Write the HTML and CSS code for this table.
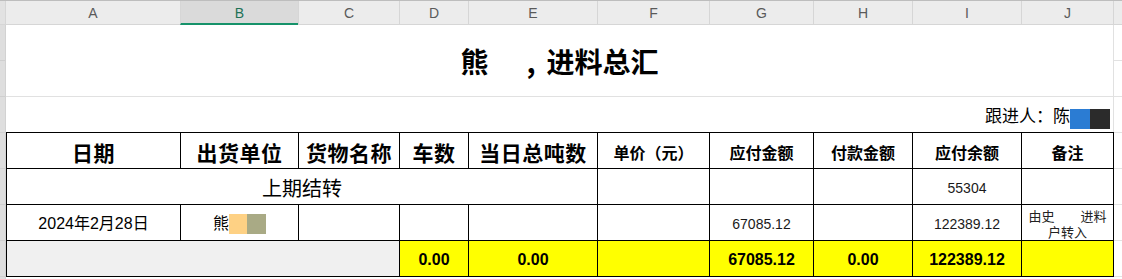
FILE: index.html
```html
<!DOCTYPE html>
<html lang="zh-CN">
<head>
<meta charset="utf-8">
<title>进料总汇</title>
<link rel="stylesheet" href="styles.css">
</head>
<body>
<div class="colhead">
  <div class="corner"></div>
  <div class="ch">A</div>
  <div class="ch sel">B</div>
  <div class="ch">C</div>
  <div class="ch">D</div>
  <div class="ch">E</div>
  <div class="ch">F</div>
  <div class="ch">G</div>
  <div class="ch">H</div>
  <div class="ch">I</div>
  <div class="ch">J</div>
  <div class="ch"></div>
</div>
<div class="body">
  <div class="rowhead">
    <div class="rh r35"></div>
    <div class="rh r36"></div>
    <div class="rh r36"></div>
    <div class="rh r36"></div>
    <div class="rh r36"></div>
    <div class="rh r36"></div>
    <div class="rh r36"></div>
  </div>
  <div class="main">
    <div class="title"><span>熊</span><span class="gap"></span><span class="comma">,</span><span>进料总汇</span></div>
    <div class="follow">跟进人：陈<span class="blk blue"></span><span class="blk dark"></span></div>
    <table class="grid">
      <colgroup>
        <col class="ca"><col class="cb"><col class="cc"><col class="cd"><col class="ce">
        <col class="cf"><col class="cg"><col class="chh"><col class="ci"><col class="cj">
      </colgroup>
      <tr class="head">
        <td class="big">日期</td>
        <td class="big">出货单位</td>
        <td class="big">货物名称</td>
        <td class="big">车数</td>
        <td class="big">当日总吨数</td>
        <td class="mid">单价（元）</td>
        <td class="mid">应付金额</td>
        <td class="mid">付款金额</td>
        <td class="mid">应付余额</td>
        <td class="mid">备注</td>
      </tr>
      <tr>
        <td colspan="5" class="carry">上期结转</td>
        <td></td>
        <td></td>
        <td></td>
        <td class="num">55304</td>
        <td></td>
      </tr>
      <tr>
        <td class="date">2024年2月28日</td>
        <td class="date">熊<span class="blk peach"></span><span class="blk olive"></span></td>
        <td></td>
        <td></td>
        <td></td>
        <td></td>
        <td class="num">67085.12</td>
        <td></td>
        <td class="num">122389.12</td>
        <td class="note">由史<span class="wgap"></span>进料<br>户转入</td>
      </tr>
      <tr class="total">
        <td colspan="3" class="grey"></td>
        <td class="y">0.00</td>
        <td class="y">0.00</td>
        <td class="y"></td>
        <td class="y">67085.12</td>
        <td class="y">0.00</td>
        <td class="y">122389.12</td>
        <td class="y"></td>
      </tr>
    </table>
  </div>
  <div class="rstrip">
    <div class="rh r35"></div>
    <div class="rh r36"></div>
    <div class="rh r36"></div>
    <div class="rh r36"></div>
    <div class="rh r36"></div>
    <div class="rh r36"></div>
    <div class="rh r36"></div>
  </div>
</div>
</body>
</html>
```

FILE: styles.css
```css
html, body {
  margin: 0;
  padding: 0;
}
body {
  width: 1122px;
  height: 279px;
  overflow: hidden;
  background: #ffffff;
  font-family: "Liberation Sans", "Noto Sans CJK SC", sans-serif;
  color: #000;
}

/* column header bar */
.colhead {
  display: grid;
  grid-template-columns: 5px 175px 118px 101px 69px 129px 112px 104px 99px 109px 92px 9px;
  height: 24px;
  border-top: 1px solid #bdbdbd;
  background: #ececec;
}
.corner {
  background: #e2e2e2;
  border-bottom: 1px solid #d6d6d6;
}
.ch {
  box-sizing: border-box;
  height: 24px;
  border-left: 1px solid #d6d6d6;
  border-bottom: 1px solid #d6d6d6;
  font-size: 14px;
  line-height: 25px;
  text-align: center;
  color: #5a5a5a;
}
.ch.sel {
  background: #dadada;
  border-bottom: 2px solid #16926a;
  color: #1e7256;
}

/* body */
.body {
  display: flex;
  height: 254px;
}
.rowhead {
  width: 5px;
  border-right: 1px solid #d2d2d2;
  background: #dedede;
}
.rstrip {
  width: 8px;
  background: #ffffff;
}
.rh {
  box-sizing: border-box;
  border-bottom: 1px solid #e2e2e2;
}
.r35 { height: 36px; }
.r36 { height: 36px; }
.rowhead .rh { border-bottom-color: #cfcfcf; }

.main {
  width: 1108px;
}
.title {
  box-sizing: border-box;
  height: 72px;
  border-bottom: 1px solid #e1e1e1;
  border-right: 1px solid #e1e1e1;
  padding-top: 18px;
  text-align: center;
  font-family: "Noto Sans CJK SC", sans-serif;
  font-size: 28px;
  font-weight: bold;
  line-height: 36px;
  white-space: nowrap;
}
.title .gap {
  display: inline-block;
  width: 38px;
}
.title .comma {
  display: inline-block;
  width: 20px;
  text-align: left;
}
.follow {
  box-sizing: border-box;
  height: 35px;
  border-right: 1px solid #e1e1e1;
  text-align: right;
  padding-right: 3px;
  font-family: "Noto Sans CJK SC", sans-serif;
  font-size: 17px;
  line-height: 35px;
  white-space: nowrap;
}
.blk {
  display: inline-block;
  width: 20px;
  height: 20px;
  vertical-align: -7px;
}
.blue { background: #2b7cd3; }
.dark { background: #2b2b2b; }
.peach { background: #fed184; width: 18px; vertical-align: -5px; }
.olive { background: #a9aa85; width: 19px; vertical-align: -5px; }

/* table */
.grid {
  border-collapse: collapse;
  table-layout: fixed;
  width: 1108px;
}
.ca { width: 174px; }
.cb { width: 118px; }
.cc { width: 101px; }
.cd { width: 69px; }
.ce { width: 129px; }
.cf { width: 112px; }
.cg { width: 104px; }
.chh { width: 99px; }
.ci { width: 109px; }
.cj { width: 92px; }
.grid tr {
  height: 36px;
}
.grid td {
  border: 1px solid #000;
  padding: 3px 0 0 0;
  text-align: center;
  vertical-align: middle;
  white-space: nowrap;
  overflow: hidden;
}
.head .big {
  font-family: "Noto Sans CJK SC", sans-serif;
  font-size: 21px;
  font-weight: bold;
  letter-spacing: 0.5px;
  line-height: 28px;
}
.head .mid {
  font-family: "Noto Sans CJK SC", sans-serif;
  font-size: 16px;
  font-weight: bold;
  line-height: 24px;
}
.carry {
  font-family: "Noto Sans CJK SC", sans-serif;
  font-size: 20px;
  line-height: 26px;
}
.num {
  font-size: 14px;
  color: #1a1a1a;
}
.date {
  font-size: 16px;
  line-height: 22px;
}
.note {
  font-family: "Noto Sans CJK SC", sans-serif;
  font-size: 13px;
  line-height: 16px;
  color: #222;
}
.wgap {
  display: inline-block;
  width: 26px;
}
.total td {
  font-size: 16px;
  font-weight: bold;
}
.grey {
  background: #f0f0f0;
}
.y {
  background: #ffff00;
}
```
